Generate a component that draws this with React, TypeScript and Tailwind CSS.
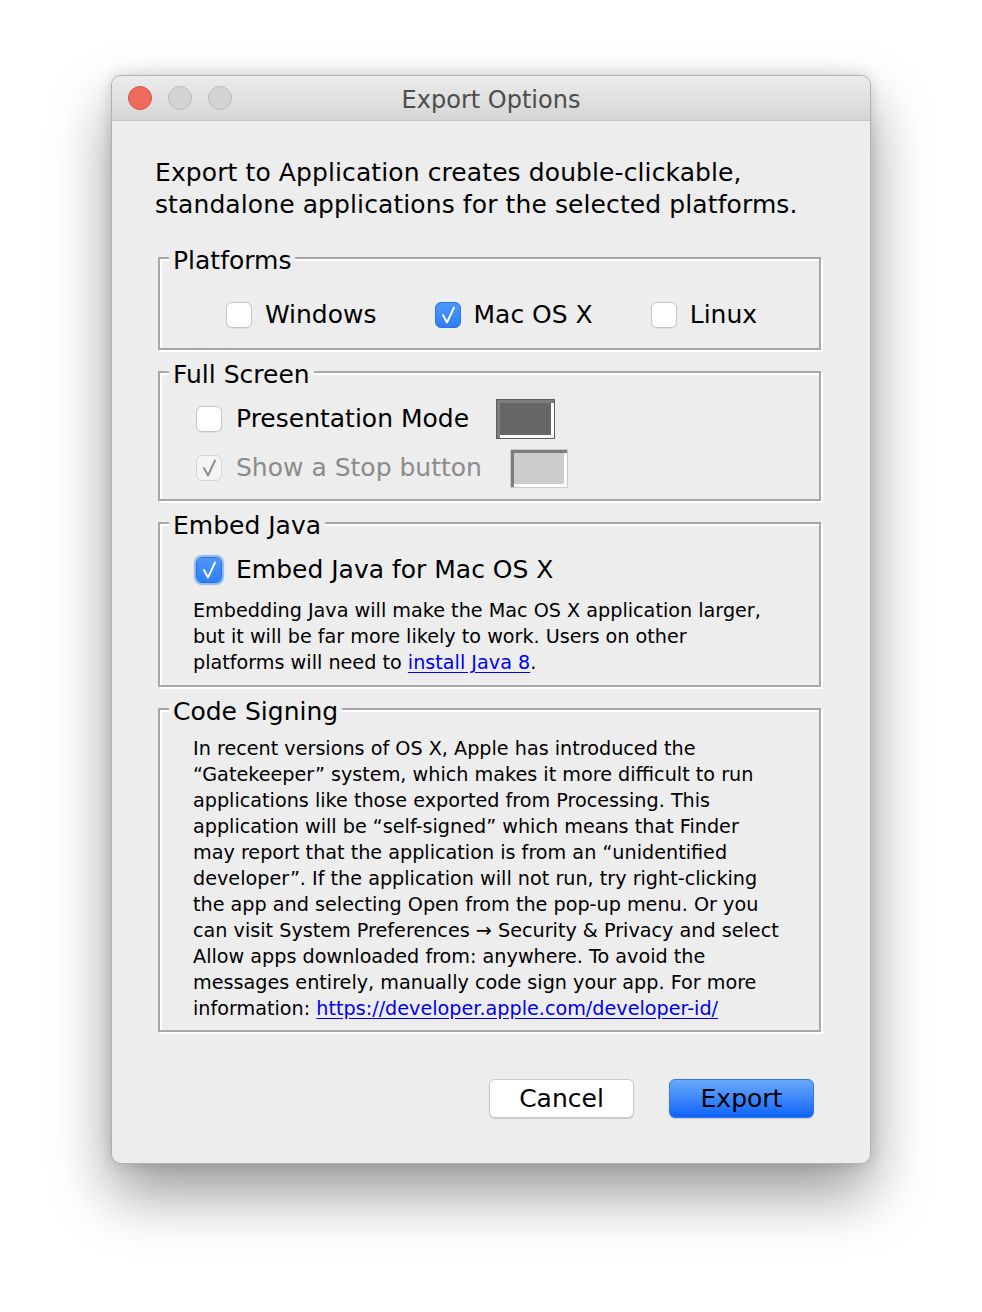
import React from "react";

const F = "font-['DejaVu_Sans','Noto_Sans',sans-serif]";

function CheckMark({ color = "#ffffff" }: { color?: string }) {
  return (
    <svg width="26" height="26" viewBox="0 0 26 26" className="absolute inset-0">
      <path d="M7 12 L11 19.5 L18 4.5" stroke={color} strokeWidth="1.9" fill="none" strokeLinecap="round" strokeLinejoin="round" />
    </svg>
  );
}

function Box({ checked = false, disabled = false, focus = false }: { checked?: boolean; disabled?: boolean; focus?: boolean }) {
  if (checked) {
    return (
      <div
        className={
          "relative w-[26px] h-[26px] shrink-0 rounded-[6px] bg-gradient-to-b from-[#4d97f8] to-[#2f7ef6] border border-[#2a72e0] " +
          (focus ? "shadow-[0_0_1px_2px_rgba(70,140,240,0.55)]" : "")
        }
      >
        <CheckMark />
      </div>
    );
  }
  if (disabled) {
    return (
      <div className="relative w-[26px] h-[26px] shrink-0 rounded-[6px] bg-[#f4f4f4] border border-[#d3d3d3]">
        <CheckMark color="#8c8c8c" />
      </div>
    );
  }
  return <div className="relative w-[26px] h-[26px] shrink-0 rounded-[6px] bg-white border border-[#c4c4c4] shadow-[0_1px_0_rgba(0,0,0,0.05)]" />;
}

function Group({ title, children }: { title: string; children: React.ReactNode }) {
  return (
    <fieldset className="m-0 ml-[46px] mr-[49px] border-2 border-[#a7a7a7] shadow-[inset_2px_2px_0_#ffffff,2px_2px_0_#ffffff] p-0">
      <legend className="ml-[9px] px-[4px] bg-[#ededed] text-[25px] leading-[30px] text-black">
        <span className="relative top-[3px]">{title}</span>
      </legend>
      {children}
    </fieldset>
  );
}

export default function App() {
  return (
    <div className={"min-h-[1312px] bg-white pt-[75px] " + F}>
      <div className="mx-auto w-[760px] h-[1089px] rounded-[10px] bg-[#ededed] border border-[#b0b0b0] shadow-[0_30px_60px_rgba(0,0,0,0.4),0_0_14px_rgba(0,0,0,0.14)] overflow-hidden flex flex-col">
        {/* Title bar */}
        <div className="relative h-[45px] shrink-0 bg-gradient-to-b from-[#ececec] to-[#d6d6d6] border-b border-[#c2c2c2] flex items-center">
          <div className="flex items-center gap-[16px] pl-[16px]">
            <div className="w-[24px] h-[24px] rounded-full bg-[#ee6a5f] border border-[#d25548]" />
            <div className="w-[24px] h-[24px] rounded-full bg-[#d3d3d3] border border-[#bdbdbd]" />
            <div className="w-[24px] h-[24px] rounded-full bg-[#d3d3d3] border border-[#bdbdbd]" />
          </div>
          <div className="absolute inset-0 pt-[3px] flex items-center justify-center text-[24px] text-[#4d4d4d] pointer-events-none">
            Export Options
          </div>
        </div>

        {/* Intro */}
        <div className="pt-[36px] pl-[43px] text-[25px] leading-[32px] tracking-[0.1px] text-black">
          Export to Application creates double-clickable,
          <br />
          standalone applications for the selected platforms.
        </div>

        {/* Platforms */}
        <div className="mt-[22px]">
          <Group title="Platforms">
            <div className="flex justify-center items-center gap-[58px] pt-[27px] pb-[18px] pl-[4px] text-[25px] leading-[30px]">
              <div className="flex items-center gap-[13px]">
                <Box />
                <span>Windows</span>
              </div>
              <div className="flex items-center gap-[13px]">
                <Box checked />
                <span>Mac OS X</span>
              </div>
              <div className="flex items-center gap-[13px]">
                <Box />
                <span>Linux</span>
              </div>
            </div>
          </Group>
        </div>

        {/* Full Screen */}
        <div className="mt-[7px]">
          <Group title="Full Screen">
            <div className="pl-[36px] pt-[12px] pb-[11px] text-[25px] leading-[30px]">
              <div className="flex items-center h-[40px]">
                <Box />
                <span className="ml-[14px]">Presentation Mode</span>
                <div className="ml-[27px] w-[59px] h-[40px] bg-[#666666] border border-[#5c5c5c] shadow-[inset_3px_3px_0_#7d7d7d,inset_-3px_-3px_0_#ffffff]" />
              </div>
              <div className="flex items-center h-[40px] mt-[9px]">
                <Box disabled />
                <span className="ml-[14px] text-[#8b8b8b]">Show a Stop button</span>
                <div className="ml-[28px] w-[58px] h-[39px] bg-[#cccccc] border border-[#c9c9c9] shadow-[inset_3px_3px_0_#7d7d7d,inset_-3px_-3px_0_#ffffff]" />
              </div>
            </div>
          </Group>
        </div>

        {/* Embed Java */}
        <div className="mt-[7px]">
          <Group title="Embed Java">
            <div className="pl-[33px] pt-[17px] pb-[9px]">
              <div className="ml-[3px] flex items-center h-[30px] text-[25px] leading-[30px]">
                <Box checked focus />
                <span className="ml-[14px]">Embed Java for Mac OS X</span>
              </div>
              <div className="mt-[13px] text-[19.2px] leading-[26px]">
                Embedding Java will make the Mac OS X application larger,
                <br />
                but it will be far more likely to work. Users on other
                <br />
                platforms will need to{" "}
                <span className="text-[#0000ee] underline underline-offset-[3px]">install Java 8</span>.
              </div>
            </div>
          </Group>
        </div>

        {/* Code Signing */}
        <div className="mt-[7px]">
          <Group title="Code Signing">
            <div className="pl-[33px] pt-[12px] pb-[8px] text-[19.2px] leading-[26px]">
              In recent versions of OS X, Apple has introduced the
              <br />
              “Gatekeeper” system, which makes it more difficult to run
              <br />
              applications like those exported from Processing. This
              <br />
              application will be “self-signed” which means that Finder
              <br />
              may report that the application is from an “unidentified
              <br />
              developer”. If the application will not run, try right-clicking
              <br />
              the app and selecting Open from the pop-up menu. Or you
              <br />
              can visit System Preferences → Security &amp; Privacy and select
              <br />
              Allow apps downloaded from: anywhere. To avoid the
              <br />
              messages entirely, manually code sign your app. For more
              <br />
              information:{" "}
              <span className="text-[#0000ee] underline underline-offset-[3px]">https://developer.apple.com/developer-id/</span>
            </div>
          </Group>
        </div>

        {/* Buttons */}
        <div className="mt-[47px] flex justify-end gap-[35px] pr-[56px]">
          <button className="w-[145px] h-[39px] rounded-[6px] bg-white border border-[#c8c8c8] shadow-[0_1px_1px_rgba(0,0,0,0.15)] text-[25px] text-black leading-none">
            Cancel
          </button>
          <button className="w-[145px] h-[39px] rounded-[6px] bg-gradient-to-b from-[#68a8fb] to-[#0a62f9] border border-[#2f78f0] shadow-[0_1px_1px_rgba(0,0,0,0.15)] text-[25px] text-black leading-none">
            Export
          </button>
        </div>
      </div>
    </div>
  );
}
